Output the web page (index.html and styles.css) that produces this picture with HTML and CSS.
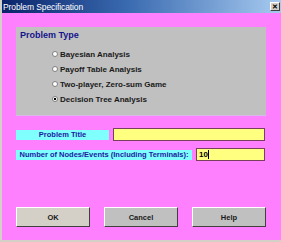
FILE: index.html
```html
<!DOCTYPE html>
<html lang="en">
<head>
  <meta charset="utf-8">
  <title>Problem Specification</title>
  <link rel="stylesheet" href="styles.css">
</head>
<body>
  <div class="window">
    <div class="titlebar">
      <span class="titlebar__text">Problem Specification</span>
      <span class="titlebar__close">&#x2715;</span>
    </div>
    <div class="client">
      <div class="frame">
        <div class="frame__title">Problem Type</div>
        <div class="options">
          <label class="option"><span class="radio"></span>Bayesian Analysis</label>
          <label class="option"><span class="radio"></span>Payoff Table Analysis</label>
          <label class="option"><span class="radio"></span>Two-player, Zero-sum Game</label>
          <label class="option"><span class="radio radio_checked"></span>Decision Tree Analysis</label>
        </div>
      </div>

      <div class="field field_title">
        <span class="field__label field__label_short">Problem Title</span>
        <span class="field__input field__input_wide"></span>
      </div>
      <div class="field field_nodes">
        <span class="field__label field__label_long">Number of Nodes/Events (Including Terminals):</span>
        <span class="field__input field__input_narrow">10<span class="caret"></span></span>
      </div>

      <div class="buttons">
        <span class="button button_default">OK</span>
        <span class="button">Cancel</span>
        <span class="button">Help</span>
      </div>
    </div>
  </div>
</body>
</html>
```

FILE: styles.css
```css
*,
*::before,
*::after {
  box-sizing: border-box;
  margin: 0;
  padding: 0;
}

body {
  width: 281px;
  height: 242px;
  overflow: hidden;
  font-family: "Liberation Sans", Arial, sans-serif;
  font-size: 8px;
  background-color: #ffffff;
}

.window {
  display: flex;
  flex-direction: column;
  width: 281px;
  height: 242px;
  border-left: 2px solid #d4d0c8;
  border-bottom: 2px solid #d4d0c8;
  background-color: #ff80ff;
}

.titlebar {
  display: flex;
  justify-content: space-between;
  align-items: center;
  height: 13px;
  padding: 0 1px 0 1px;
  color: #ffffff;
  background: linear-gradient(to right, #0a246a, #3a6ab0 45%, #a6caf0);
}

.titlebar__text {
  font-size: 8.5px;
  letter-spacing: -0.1px;
}

.titlebar__close {
  display: flex;
  justify-content: center;
  align-items: center;
  width: 10px;
  height: 9px;
  border: 1px solid;
  border-color: #ffffff #404040 #404040 #ffffff;
  color: #000000;
  font-size: 7px;
  font-weight: bold;
  background-color: #d4d0c8;
}

.client {
  display: flex;
  flex-direction: column;
  flex: 1;
  padding: 14px 15px 0 14px;
}

.frame {
  height: 89px;
  padding: 3px 4px;
  border-bottom: 1px solid #d8b8e8;
  background-color: #c0c0c0;
}

.frame__title {
  color: #14148c;
  font-size: 9px;
  font-weight: bold;
}

.options {
  display: flex;
  flex-direction: column;
  gap: 5px;
  margin-top: 9px;
  padding-left: 32px;
}

.option {
  display: flex;
  align-items: center;
  gap: 2px;
  height: 10px;
  color: #1a1a1a;
  font-size: 8px;
  font-weight: bold;
}

.radio {
  width: 6px;
  height: 6px;
  border: 1px solid #808080;
  border-radius: 50%;
  background-color: #ffffff;
}

.radio_checked {
  background: radial-gradient(circle, #000000 45%, #ffffff 55%);
}

.field {
  display: flex;
  align-items: center;
  gap: 4px;
  height: 13px;
}

.field_title {
  margin-top: 12px;
}

.field_nodes {
  margin-top: 7px;
}

.field__label {
  display: flex;
  justify-content: center;
  align-items: center;
  height: 10px;
  color: #1a1aa0;
  font-size: 7.5px;
  font-weight: bold;
  background-color: #80ffff;
}

.field__label_short {
  width: 93px;
}

.field__label_long {
  width: 176px;
}

.field__input {
  display: flex;
  align-items: center;
  height: 13px;
  padding-left: 2px;
  border: 1px solid #7a4060;
  color: #000000;
  font-size: 8px;
  font-weight: bold;
  background-color: #ffff80;
}

.field__input_wide {
  width: 152px;
}

.field__input_narrow {
  width: 69px;
}

.caret {
  width: 1px;
  height: 9px;
  background-color: #000000;
}

.buttons {
  display: flex;
  justify-content: space-between;
  margin-top: 46px;
}

.button {
  display: flex;
  justify-content: center;
  align-items: center;
  width: 74px;
  height: 20px;
  border: 1px solid;
  border-color: #ffffff #404040 #404040 #ffffff;
  color: #1a1a1a;
  font-size: 7.5px;
  font-weight: bold;
  background-color: #c0c0c0;
}

.button_default {
  background-color: #d4d0c8;
}
```
